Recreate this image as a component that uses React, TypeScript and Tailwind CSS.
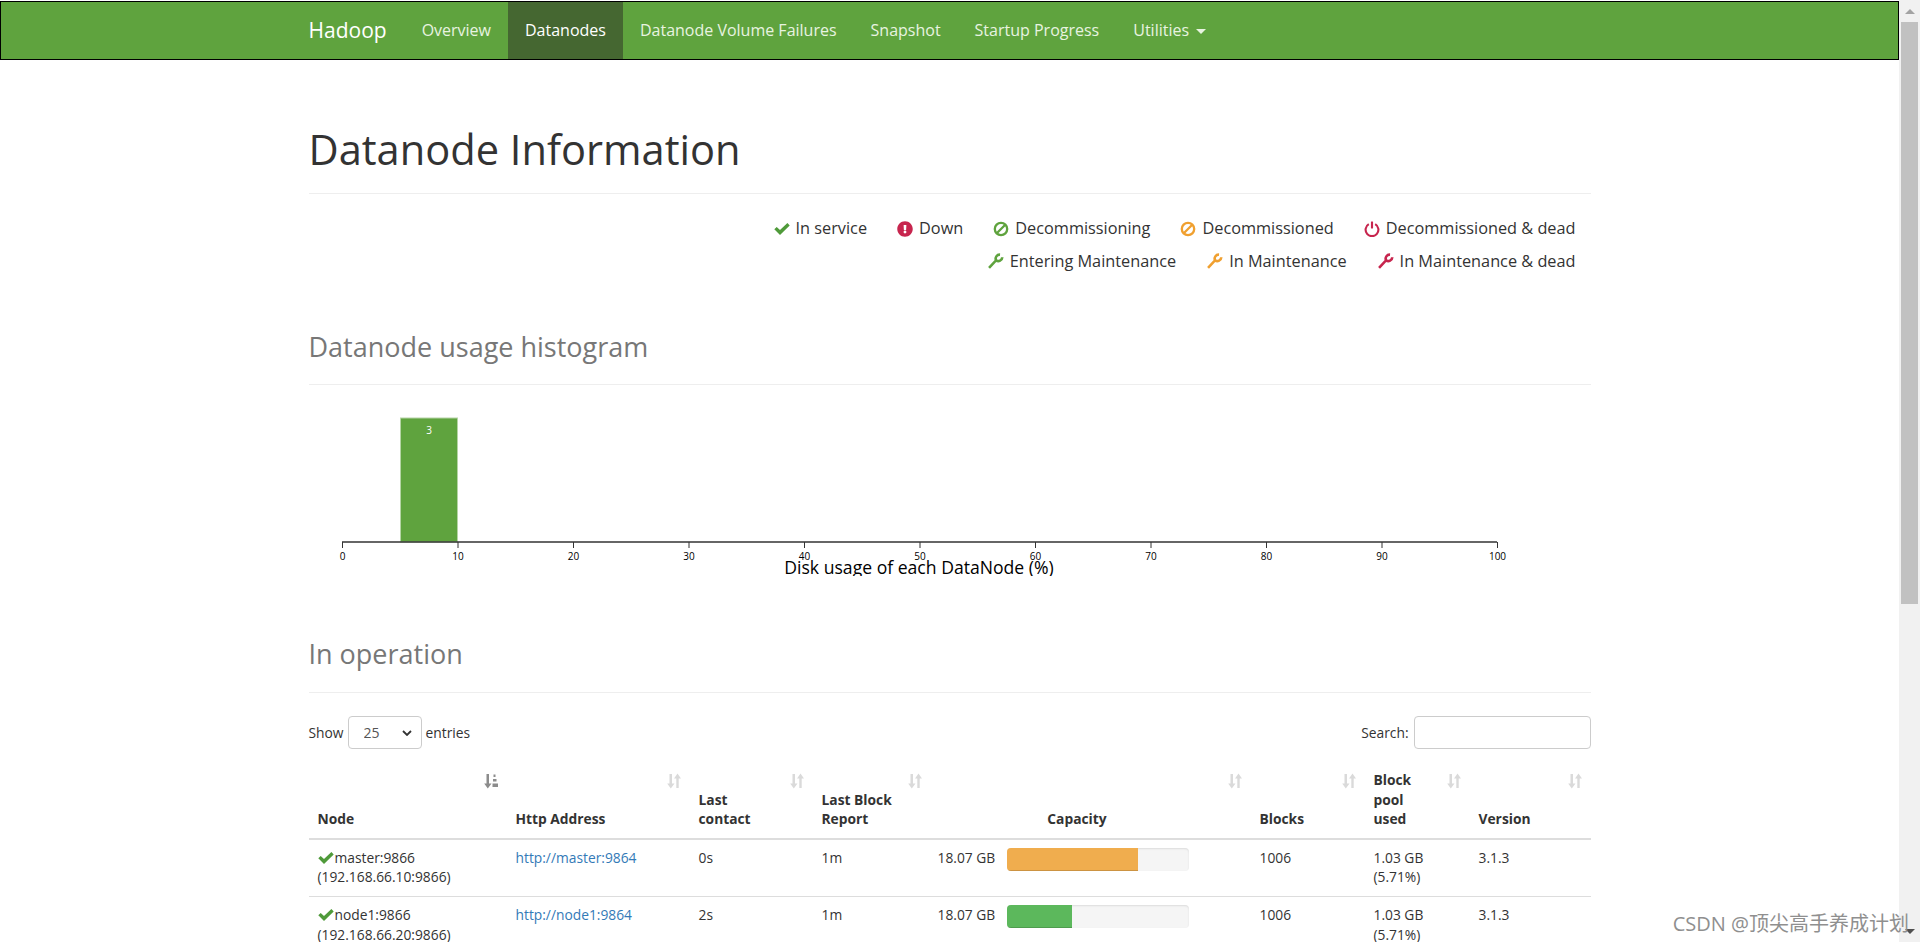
import React from "react";
import { FaExclamationCircle } from "react-icons/fa";

const F = { fontFamily: '"Open Sans", "Noto Sans", sans-serif' };

function Check({ className }: { className?: string }) {
  return (
    <svg viewBox="0 0 16 12" className={className} fill="currentColor">
      <polygon points="0.3,6.300 2.700,3.900 6,7 13.400,0 15.700,2.400 6,12" />
    </svg>
  );
}

function Ban({ className }: { className?: string }) {
  return (
    <svg viewBox="0 0 15 15" className={className} fill="none" stroke="currentColor" strokeWidth="2.200">
      <circle cx="7.500" cy="7.500" r="5.800" />
      <path d="M3.500 11.500L11.500 3.500" />
    </svg>
  );
}

function PowerIcon({ className }: { className?: string }) {
  return (
    <svg viewBox="0 0 15 15" className={className} fill="none" stroke="currentColor" strokeWidth="2">
      <path d="M4.500 3A6 6 0 1 0 10.500 3" />
      <path d="M7.500 0.500V7" />
    </svg>
  );
}

function Wrench({ className }: { className?: string }) {
  return (
    <svg viewBox="0 0 15 15" className={className} fill="none" stroke="currentColor" strokeWidth="2.300">
      <path d="M11.500 1.500A3.500 3.500 0 0 0 8 6.500L1.800 13.200" />
      <path d="M13.500 3.800A3.500 3.500 0 0 1 8 6.500" />
    </svg>
  );
}

function Sort({ dark }: { dark?: boolean }) {
  return (
    <svg
      viewBox="0 0 14 16"
      className={`absolute right-[9px] top-[3px] h-4 w-[14px] ${dark ? "text-[#8c8c8c]" : "text-[#dadada]"}`}
      fill="currentColor"
    >
      {dark ? (
        <>
          <path d="M2.500 1h2.500v9.500h2.500L3.800 15.500 0.200 10.500h2.300z" />
          <path d="M9.500 1.500h2v2.500h-2zM9 6h3.500v2.500H9zM8.500 10.500h5.500v3.500H8.500z" />
        </>
      ) : (
        <>
          <path d="M2.500 1h2.500v9.500h2.500L3.800 15.500 0.200 10.500h2.300z" />
          <path d="M9.300 15V5.500H7L10.500.5 14 5.500h-2.300V15z" />
        </>
      )}
    </svg>
  );
}

function Legend({ icon, label }: { icon: React.ReactNode; label: string }) {
  return (
    <span className="ml-[30px] inline-flex items-center gap-[6px]">
      {icon}
      <span>{label}</span>
    </span>
  );
}

function Heading({ children, className }: { children: React.ReactNode; className?: string }) {
  return (
    <div className={`border-b border-[#eeeeee] text-[27px] leading-[30px] text-[#777777] ${className ?? ""}`}>
      {children}
    </div>
  );
}

const headers: { label: React.ReactNode; dark?: boolean; pr?: string; center?: boolean }[] = [
  { label: "Node", dark: true },
  { label: "Http Address" },
  { label: "Last contact", pr: "pr-[40px]" },
  { label: "Last Block Report" },
  { label: "Capacity", center: true, pr: "pr-[36px]" },
  { label: "Blocks" },
  { label: "Block pool used", pr: "pr-[36px]" },
  { label: "Version" },
];

const rows = [
  { name: "master", ip: "192.168.66.10", last: "0s", pct: 72, bar: "bg-[#f0ad4e]" },
  { name: "node1", ip: "192.168.66.20", last: "2s", pct: 36, bar: "bg-[#5cb85c]" },
];

function Histogram() {
  const ticks = [0, 10, 20, 30, 40, 50, 60, 70, 80, 90, 100];
  return (
    <svg width="1282" height="191" viewBox="0 0 1282 191" className="block" style={F}>
      <rect x="91.500" y="33" width="57" height="124" fill="#5fa33e" stroke="#b5d4a5" strokeWidth="1" />
      <text x="120" y="49" fontSize="10" fill="#fff" textAnchor="middle">3</text>
      <line x1="33" x2="1188" y1="157" y2="157" stroke="#333" strokeWidth="1.500" />
      {ticks.map((t) => {
        const x = 33.500 + t * 11.55;
        return (
          <g key={t}>
            <line x1={x} x2={x} y1="157" y2="163" stroke="#333" />
            <text x={x} y="175" fontSize="10" fill="#000" textAnchor="middle">{t}</text>
          </g>
        );
      })}
      <text x="610" y="189" fontSize="17.600" fill="#000" textAnchor="middle">Disk usage of each DataNode (%)</text>
    </svg>
  );
}

export default function App() {
  return (
    <div className="relative flex h-[942px] w-[1920px] overflow-hidden bg-white text-[13.800px] leading-[19.600px] text-[#333333]" style={F}>
      <div className="h-full w-[1899px] overflow-hidden pt-px">
        <nav className="h-[59px] border border-black bg-[#5fa33e]">
          <div className="mx-auto flex h-full w-[1282px] items-stretch text-[16px] text-[#e8f3e0]">
            <a className="mr-[35px] flex items-center text-[21px] text-white">Hadoop</a>
            <a className="-ml-[17px] flex items-center px-[17px]">Overview</a>
            <a className="flex items-center bg-[#456731] px-[17px] text-white">Datanodes</a>
            <a className="flex items-center px-[17px]">Datanode Volume Failures</a>
            <a className="flex items-center px-[17px]">Snapshot</a>
            <a className="flex items-center px-[17px]">Startup Progress</a>
            <a className="flex items-center gap-[7px] px-[17px]">
              Utilities
              <span className="mt-[2px] border-x-[5px] border-t-[5px] border-x-transparent border-t-[#e8f3e0]" />
            </a>
          </div>
        </nav>

        <main className="mx-auto w-[1282px]">
          <h1 className="mt-[59px] border-b border-[#eeeeee] pb-[14px] text-[41.600px] leading-[60px] text-[#333333]">Datanode Information</h1>

          <div className="mt-[24px] flex flex-col items-end gap-[12px] pr-[15px] text-[16.300px] leading-[21px]">
            <div className="flex">
              <Legend icon={<Check className="h-[12px] w-[16px] text-[#4f9a3a]" />} label="In service" />
              <Legend icon={<FaExclamationCircle className="h-[16px] w-[16px] text-[#c7254e]" />} label="Down" />
              <Legend icon={<Ban className="h-[16px] w-[16px] text-[#5fa33e]" />} label="Decommissioning" />
              <Legend icon={<Ban className="h-[16px] w-[16px] text-[#f0a030]" />} label="Decommissioned" />
              <Legend icon={<PowerIcon className="h-[16px] w-[16px] text-[#c7254e]" />} label="Decommissioned & dead" />
            </div>
            <div className="flex">
              <Legend icon={<Wrench className="h-[17px] w-[17px] text-[#5fa33e]" />} label="Entering Maintenance" />
              <Legend icon={<Wrench className="h-[17px] w-[17px] text-[#f0a030]" />} label="In Maintenance" />
              <Legend icon={<Wrench className="h-[17px] w-[17px] text-[#c7254e]" />} label="In Maintenance & dead" />
            </div>
          </div>

          <Heading className="mt-[60px] pb-[22px]">Datanode usage histogram</Heading>
          <Histogram />

          <Heading className="mt-[63px] pb-[23px]">In operation</Heading>

          <div className="mt-[23px] flex items-center justify-between">
            <label className="flex items-center gap-[4px]">
              Show
              <span className="relative block">
                <select defaultValue="25" className="h-[33px] w-[74px] appearance-none rounded-[4px] border border-[#cccccc] bg-white pl-[15px] text-[14px] text-[#555555]">
                  <option>25</option>
                </select>
                <svg viewBox="0 0 10 6" className="absolute right-[10px] top-[14px] h-[6px] w-[10px]" fill="none" stroke="#333" strokeWidth="1.800">
                  <path d="M1 1l4 4 4-4" />
                </svg>
              </span>
              entries
            </label>
            <label className="flex items-center gap-[5px]">
              Search:
              <input className="h-[33px] w-[177px] rounded-[4px] border border-[#cccccc] bg-white" />
            </label>
          </div>

          <table className="mt-[21px] w-full table-fixed border-collapse">
            <colgroup>
              <col className="w-[198px]" />
              <col className="w-[183px]" />
              <col className="w-[123px]" />
              <col className="w-[118px]" />
              <col className="w-[320px]" />
              <col className="w-[114px]" />
              <col className="w-[105px]" />
              <col className="w-[121px]" />
            </colgroup>
            <thead>
              <tr className="border-b-[2px] border-[#dddddd]">
                {headers.map((h, i) => (
                  <th
                    key={i}
                    className={`relative h-[68px] px-[9px] pb-[9px] align-bottom font-bold ${h.center ? "text-center" : "text-left"} ${h.pr ?? ""}`}
                  >
                    {h.label}
                    <Sort dark={h.dark} />
                  </th>
                ))}
              </tr>
            </thead>
            <tbody>
              {rows.map((r) => (
                <tr key={r.name} className="border-b border-[#dddddd] align-top">
                  <td className="px-[9px] pb-[9px] pt-[8px]">
                    <div className="flex items-center gap-px">
                      <Check className="h-[12px] w-[16px] text-[#4f9a3a]" />
                      {r.name}:9866
                    </div>
                    ({r.ip}:9866)
                  </td>
                  <td className="px-[9px] pt-[8px]">
                    <a className="text-[#337ab7]">http://{r.name}:9864</a>
                  </td>
                  <td className="px-[9px] pt-[8px]">{r.last}</td>
                  <td className="px-[9px] pt-[8px]">1m</td>
                  <td className="pl-[7px] pr-[9px] pt-[8px]">
                    <div className="flex items-start">
                      <span className="w-[69px]">18.07 GB</span>
                      <div className="h-[23px] w-[182px] overflow-hidden rounded-[4px] bg-[#f5f5f5] shadow-[inset_0_1px_2px_rgba(0,0,0,0.1)]">
                        <div className={`h-full ${r.bar} shadow-[inset_0_-1px_0_rgba(0,0,0,0.15)]`} style={{ width: `${r.pct}%` }} />
                      </div>
                    </div>
                  </td>
                  <td className="px-[9px] pt-[8px]">1006</td>
                  <td className="px-[9px] pt-[8px]">1.03 GB<br />(5.71%)</td>
                  <td className="px-[9px] pt-[8px]">3.1.3</td>
                </tr>
              ))}
            </tbody>
          </table>
        </main>
      </div>

      <div className="flex h-full w-[21px] shrink-0 flex-col items-center bg-[#f1f1f1]">
        <div className="flex h-[22px] w-full items-center justify-center">
          <span className="border-x-[5px] border-b-[5px] border-x-transparent border-b-[#a3a3a3]" />
        </div>
        <div className="h-[582px] w-[17px] bg-[#c1c1c1]" />
        <div className="flex-1" />
        <div className="flex h-[22px] w-full items-center justify-center">
          <span className="border-x-[5px] border-t-[5px] border-x-transparent border-t-[#505050]" />
        </div>
      </div>

      <div
        className="absolute bottom-[6px] right-[11px] text-[20px] leading-[24px] text-[#8f8f8f]"
        style={{ fontFamily: '"Open Sans", "Noto Sans CJK SC", sans-serif' }}
      >
        CSDN @顶尖高手养成计划
      </div>
    </div>
  );
}
